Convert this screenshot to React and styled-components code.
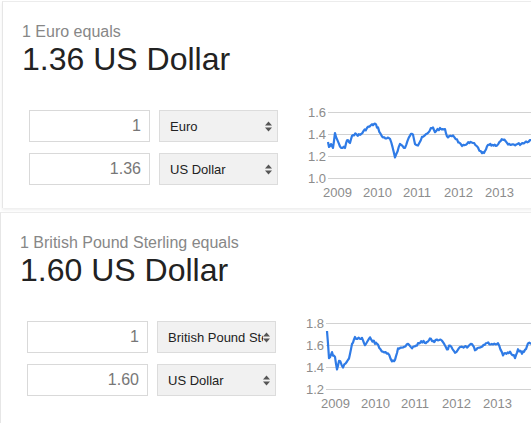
import React from 'react';
import styled, { createGlobalStyle } from 'styled-components';

const GlobalStyle = createGlobalStyle`
  html, body {
    margin: 0;
    padding: 0;
    background: #fff;
    overflow: hidden;
  }
  body {
    font-family: 'Liberation Sans', Arial, sans-serif;
  }
`;

// raw points traced from the screenshot (page coordinates of each card)
const EURO_POINTS = [
  [328, 142], [329, 147], [331, 145], [333, 148], [335, 134], [336, 136], [340, 147], [345, 148],
  [347, 140], [350, 143], [353, 134], [360, 135], [367, 128], [372, 125], [375, 124], [378, 128],
  [382, 137], [390, 139], [395, 157], [400, 144], [405, 148], [410, 135], [413, 134], [415, 143],
  [418, 145], [422, 138], [427, 134], [432, 127], [435, 132], [440, 128], [445, 130], [448, 138],
  [453, 135], [457, 140], [462, 147], [467, 143], [473, 143], [478, 148], [482, 154], [485, 152],
  [488, 145], [497, 145], [503, 139], [508, 145], [520, 144], [525, 142], [531, 140], [540, 139],
].map(([x, y]) => [x - 300, y - 110]);

const POUND_POINTS = [
  [327, 331], [328, 343], [329, 358], [332, 353], [335, 358], [337, 370], [339, 360], [343, 367],
  [347, 362], [350, 355], [352, 345], [355, 338], [362, 338], [365, 345], [370, 338], [375, 343],
  [378, 345], [383, 353], [388, 353], [392, 362], [395, 360], [398, 348], [403, 348], [408, 343],
  [412, 348], [417, 345], [420, 342], [427, 342], [430, 338], [433, 342], [438, 340], [443, 341],
  [447, 350], [450, 345], [455, 352], [460, 348], [467, 347], [472, 344], [475, 350], [480, 348],
  [487, 343], [493, 345], [498, 344], [503, 355], [510, 352], [515, 357], [518, 350], [522, 353],
  [525, 350], [528, 344], [538, 342],
].map(([x, y]) => [x - 298, y - 321]);

const YEARS = [
  { label: '2009', x: 23 },
  { label: '2010', x: 63 },
  { label: '2011', x: 103 },
  { label: '2012', x: 144 },
  { label: '2013', x: 185 },
];

const GRID_Y = [2, 24, 46, 68];

const conversions = [
  {
    id: 'eur',
    from: 'Euro',
    amount: '1.36',
    ticks: ['1.6', '1.4', '1.2', '1.0'],
    points: EURO_POINTS,
    seed: 7,
    shift: 2,
  },
  {
    id: 'gbp',
    from: 'British Pound Sterling',
    amount: '1.60',
    ticks: ['1.8', '1.6', '1.4', '1.2'],
    points: POUND_POINTS,
    seed: 13,
    shift: 0,
  },
];

const buildPath = (points, seed) => {
  let s = seed;
  const rand = () => {
    s = (s * 9301 + 49297) % 233280;
    return s / 233280;
  };
  const out = [];
  for (let i = 0; i < points.length - 1; i++) {
    const [x0, y0] = points[i];
    const [x1, y1] = points[i + 1];
    const steps = Math.max(1, Math.round((x1 - x0) / 1.2));
    for (let k = 0; k < steps; k++) {
      const t = k / steps;
      const jitter = i === 0 && k === 0 ? 0 : (rand() - 0.5) * 2.4;
      out.push([x0 + (x1 - x0) * t, y0 + (y1 - y0) * t + jitter]);
    }
  }
  out.push(points[points.length - 1]);
  return out.map(([x, y], i) => `${i ? 'L' : 'M'}${x.toFixed(1)} ${y.toFixed(1)}`).join(' ');
};

const Page = styled.div`
  width: 560px;
  display: flex;
  flex-direction: column;
  gap: 4px;
  padding-top: 1px;
`;

const Card = styled.section`
  box-sizing: border-box;
  width: 560px;
  margin-left: ${({ $shift }) => $shift}px;
  padding: 20px 0 23px 19px;
  background: #fff;
  border-top: 1px solid #ececec;
  border-left: 1px solid #e6e6e6;
  box-shadow: 0 2px 3px rgba(0, 0, 0, 0.07);

  &:last-child {
    padding-bottom: 40px;
  }
`;

const Subtitle = styled.div`
  font-size: 16px;
  line-height: 19px;
  color: #878787;
`;

const Result = styled.div`
  font-size: 32px;
  line-height: 36px;
  color: #222;
`;

const Converter = styled.div`
  display: flex;
  align-items: flex-start;
  margin: 33px 0 0 7px;
`;

const Form = styled.div`
  display: grid;
  grid-template-columns: 121px 119px;
  column-gap: 9px;
  row-gap: 11px;
`;

const AmountInput = styled.input`
  box-sizing: border-box;
  width: 121px;
  height: 32px;
  margin: 0;
  padding: 0 8px 0 6px;
  border: 1px solid #d9d9d9;
  background: #fff;
  font-family: 'Liberation Sans', Arial, sans-serif;
  font-size: 16px;
  color: #777;
  text-align: right;
  outline: none;
`;

const Select = styled.div`
  box-sizing: border-box;
  display: flex;
  align-items: center;
  height: 32px;
  padding: 0 5px 0 10px;
  border: 1px solid #dcdcdc;
  background: #f1f1f1;
  font-size: 13px;
  color: #222;
`;

const SelectText = styled.span`
  flex: 1;
  overflow: hidden;
  white-space: nowrap;
  margin-top: 1px;
`;

const Arrows = styled.svg`
  flex: none;
  display: block;
`;

const Chart = styled.svg`
  display: block;
  flex: none;
  margin-left: 22px;
  margin-bottom: -17px;
  overflow: visible;
`;

const AxisText = styled.text`
  font-family: 'Liberation Sans', Arial, sans-serif;
  font-size: 13px;
  fill: #8c8c8c;
`;

const SelectBox = ({ label }) => (
  <Select>
    <SelectText>{label}</SelectText>
    <Arrows width="7" height="11" viewBox="0 0 7 11">
      <polygon points="0,4.5 3.5,0.5 7,4.5" fill="#555" />
      <polygon points="0,6.5 3.5,10.5 7,6.5" fill="#555" />
    </Arrows>
  </Select>
);

const RateChart = ({ ticks, points, seed }) => (
  <Chart width="240" height="92">
    {GRID_Y.map((y, i) => (
      <g key={y}>
        <line x1="28" x2="260" y1={y + 0.5} y2={y + 0.5} stroke="#d2d2d2" strokeWidth="1" />
        <AxisText x="26" y={y + 5} textAnchor="end">
          {ticks[i]}
        </AxisText>
      </g>
    ))}
    <path d={buildPath(points, seed)} fill="none" stroke="#2f7be6" strokeWidth="2.2" strokeLinejoin="round" />
    {YEARS.map(({ label, x }) => (
      <AxisText key={label} x={x} y="87">
        {label}
      </AxisText>
    ))}
  </Chart>
);

const App = () => (
  <>
    <GlobalStyle />
    <Page>
      {conversions.map(({ id, from, amount, ticks, points, seed, shift }) => (
        <Card key={id} $shift={shift}>
          <Subtitle>{`1 ${from} equals`}</Subtitle>
          <Result>{`${amount} US Dollar`}</Result>
          <Converter>
            <Form>
              <AmountInput defaultValue="1" readOnly />
              <SelectBox label={from} />
              <AmountInput defaultValue={amount} readOnly />
              <SelectBox label="US Dollar" />
            </Form>
            <RateChart ticks={ticks} points={points} seed={seed} />
          </Converter>
        </Card>
      ))}
    </Page>
  </>
);

export default App;
